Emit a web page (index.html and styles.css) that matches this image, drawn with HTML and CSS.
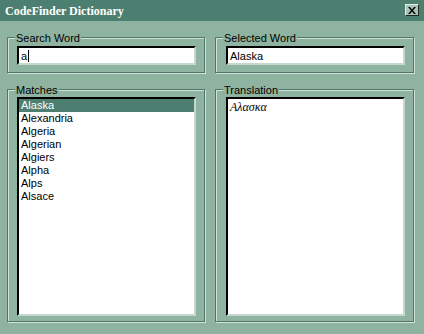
FILE: index.html
```html
<!DOCTYPE html>
<html>
<head>
<meta charset="utf-8">
<link rel="stylesheet" href="styles.css">
</head>
<body>
<div class="window">
  <div class="titlebar">
    <span class="title">CodeFinder Dictionary</span>
    <span class="close"><svg width="8" height="7" viewBox="0 0 8 7"><path d="M0 0h2l2 2.5L6 0h2L5 3.5 8 7H6L4 4.5 2 7H0l3-3.5z" fill="#000"/></svg></span>
  </div>
  <div class="content">
    <div class="group top">
      <span class="legend">Search Word</span>
      <div class="field">a<span class="caret"></span></div>
    </div>
    <div class="group top">
      <span class="legend">Selected Word</span>
      <div class="field">Alaska</div>
    </div>
    <div class="group bottom">
      <span class="legend">Matches</span>
      <div class="box list">
        <div class="item sel">Alaska</div>
        <div class="item">Alexandria</div>
        <div class="item">Algeria</div>
        <div class="item">Algerian</div>
        <div class="item">Algiers</div>
        <div class="item">Alpha</div>
        <div class="item">Alps</div>
        <div class="item">Alsace</div>
      </div>
    </div>
    <div class="group bottom">
      <span class="legend">Translation</span>
      <div class="box trans">Αλασκα</div>
    </div>
  </div>
</div>
</body>
</html>
```
FILE: styles.css
```css
html, body {
  margin: 0;
  padding: 0;
}
body {
  width: 424px;
  height: 334px;
  overflow: hidden;
  background: #8fb3a1;
  font-family: "Liberation Sans", Arial, sans-serif;
  font-size: 11px;
  color: #000;
}
.window {
  width: 424px;
  height: 334px;
  display: flex;
  flex-direction: column;
}
.titlebar {
  height: 21px;
  box-sizing: border-box;
  background: #4d7f70;
  display: flex;
  align-items: flex-start;
  justify-content: space-between;
  padding: 2px 5px 0 5px;
}
.title {
  font-family: "Liberation Serif", "Times New Roman", serif;
  font-weight: bold;
  font-size: 12px;
  line-height: 19px;
  color: #fff;
}
.close {
  margin-top: 2px;
  width: 14px;
  height: 12px;
  box-sizing: border-box;
  background: #a9c4b7;
  border: 1px solid;
  border-color: #e4eee9 #1c2c25 #1c2c25 #e4eee9;
  display: flex;
  align-items: center;
  justify-content: center;
}
.content {
  display: grid;
  grid-template-columns: 198px 199px;
  grid-template-rows: 36px 233px;
  column-gap: 10px;
  row-gap: 16px;
  padding: 16px 10px 0 7px;
}
.group {
  position: relative;
  box-sizing: border-box;
  border: 1px solid #4f7668;
  box-shadow: 1px 1px 0 #d2e2da, inset 1px 1px 0 #d2e2da;
  padding: 8px 8px 7px 9px;
}
.group + .group.top, .group.bottom + .group.bottom {
  padding-left: 10px;
}
.group.bottom {
  padding-top: 7px;
  padding-bottom: 5px;
}
.legend {
  position: absolute;
  top: -6px;
  left: 7px;
  padding: 0 1px;
  background: #8fb3a1;
  line-height: 13px;
}
.field {
  height: 19px;
  box-sizing: border-box;
  background: #fff;
  border: 2px solid;
  border-color: #000 #c6d8ce #c6d8ce #000;
  padding: 0 2px;
  line-height: 14px;
  display: flex;
  align-items: center;
}
.caret {
  display: inline-block;
  width: 1px;
  height: 12px;
  background: #000;
  margin-left: 1px;
}
.box {
  height: 219px;
  box-sizing: border-box;
  background: #fff;
  border: 2px solid;
  border-color: #000 #c6d8ce #c6d8ce #000;
}
.item {
  line-height: 13px;
  padding-left: 2px;
}
.item.sel {
  background: #4d7f70;
  color: #fff;
}
.trans {
  font-family: "Liberation Serif", "Times New Roman", serif;
  font-style: italic;
  font-size: 12px;
  line-height: 14px;
  padding: 1px 2px;
}
```
